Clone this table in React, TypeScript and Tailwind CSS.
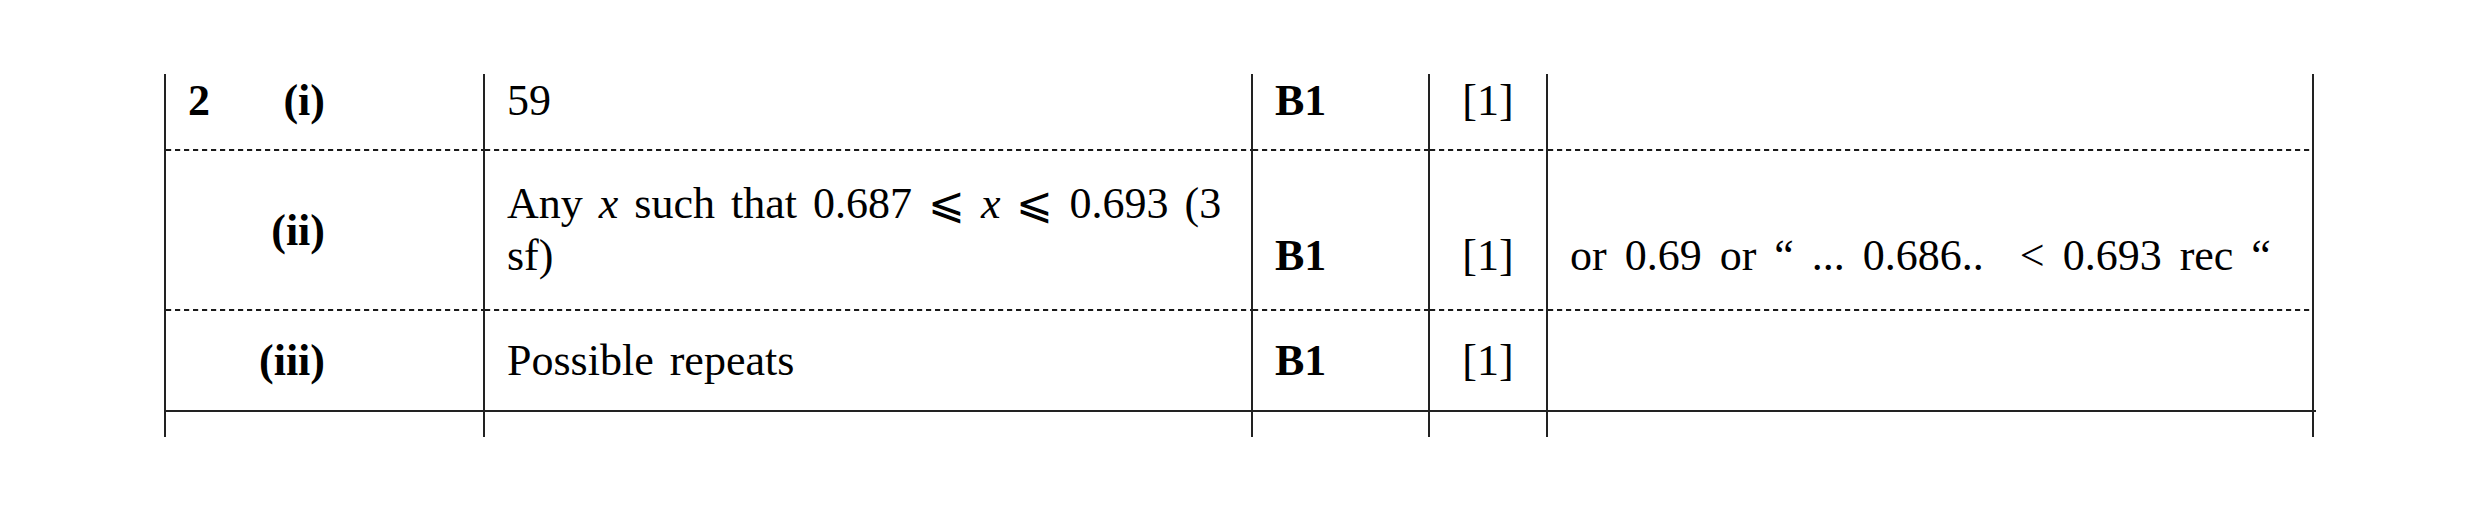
import React from 'react';

const cols = 'grid grid-cols-[319px_768px_177px_118px_768px]';
const dash =
  'h-[2px] border-l-2 border-[#222] bg-[repeating-linear-gradient(to_right,#1a1a1a_0px,#1a1a1a_5px,#d8d8d8_5px,#d8d8d8_6px,transparent_6px,transparent_9px)]';

function Separator() {
  return (
    <div className={cols}>
      <div className={dash} />
      <div className={dash} />
      <div className={dash} />
      <div className={dash} />
      <div className={`${dash} border-r-2`} />
    </div>
  );
}

function Label({ q, part }: { q?: string; part: string }) {
  return (
    <div className="flex font-bold">
      <span className="w-[22px]">{q}</span>
      <span className="w-[115px] text-right">{part}</span>
    </div>
  );
}

type Row = {
  height: string;
  pad: string;
  labelPad: string;
  markPad: string;
  q?: string;
  part: string;
  answer: React.ReactNode;
  comment?: string;
};

const leq = <span className="font-['DejaVu_Serif',serif] text-[44px] leading-[52px]">⩽</span>;

const rows: Row[] = [
  { height: 'h-[75px]', pad: 'pt-[1px]', labelPad: 'pt-[1px]', markPad: 'pt-[1px]', q: '2', part: '(i)', answer: '59' },
  {
    height: 'h-[158px]',
    pad: 'pt-[26px]',
    labelPad: 'pt-[54px]',
    markPad: 'pt-[79px]',
    part: '(ii)',
    answer: (
      <>
        Any <i>x</i> such that 0.687 {leq} <i>x</i> {leq} 0.693 (3
        <br />
        sf)
      </>
    ),
    comment: 'or 0.69 or \u201C ... 0.686..  < 0.693 rec \u201C',
  },
  { height: 'h-[99px]', pad: 'pt-[24px]', labelPad: 'pt-[24px]', markPad: 'pt-[24px]', part: '(iii)', answer: 'Possible repeats' },
];

export default function App() {
  return (
    <div className="w-[2480px] h-[512px] bg-white text-black font-['Liberation_Serif','Times_New_Roman',serif] text-[44px] leading-[52px] pt-[74px] pl-[164px]">
      {rows.map((r, i) => (
        <React.Fragment key={i}>
          {i > 0 && <Separator />}
          <div className={`${cols} ${r.height}`}>
            <div className={`border-l-2 border-[#222] pl-[22px] ${r.labelPad}`}>
              <Label q={r.q} part={r.part} />
            </div>
            <div className={`border-l-2 border-[#222] pl-[22px] [word-spacing:5px] ${r.pad}`}>{r.answer}</div>
            <div className={`border-l-2 border-[#222] pl-[22px] font-bold ${r.markPad}`}>B1</div>
            <div className={`border-l-2 border-[#222] text-center ${r.markPad}`}>[1]</div>
            <div className={`border-l-2 border-r-2 border-[#222] pl-[22px] whitespace-pre [word-spacing:7px] ${r.markPad}`}>
              {r.comment}
            </div>
          </div>
        </React.Fragment>
      ))}
      <div className="w-[2152px] h-[2px] bg-[#222]" />
      <div className={`${cols} h-[25px]`}>
        <div className="border-l-2 border-[#222]" />
        <div className="border-l-2 border-[#222]" />
        <div className="border-l-2 border-[#222]" />
        <div className="border-l-2 border-[#222]" />
        <div className="border-l-2 border-r-2 border-[#222]" />
      </div>
    </div>
  );
}
